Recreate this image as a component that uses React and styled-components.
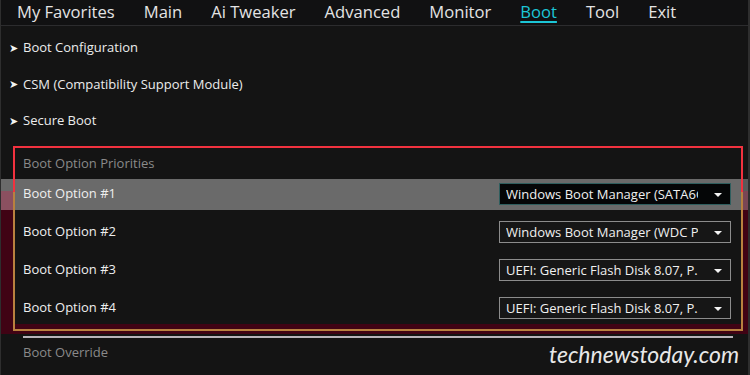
import styled, { createGlobalStyle } from "styled-components";

const GlobalStyle = createGlobalStyle`
  html, body { margin: 0; padding: 0; background: #141414; }
  body { font-family: "Open Sans", "Noto Sans", sans-serif; }
`;

const tabs = ["My Favorites", "Main", "Ai Tweaker", "Advanced", "Monitor", "Boot", "Tool", "Exit"];
const menus = ["Boot Configuration", "CSM (Compatibility Support Module)", "Secure Boot"];
const options = [
  { label: "Boot Option #1", value: "Windows Boot Manager (SATA6G", active: true },
  { label: "Boot Option #2", value: "Windows Boot Manager (WDC PC" },
  { label: "Boot Option #3", value: "UEFI: Generic Flash Disk 8.07, P." },
  { label: "Boot Option #4", value: "UEFI: Generic Flash Disk 8.07, P." },
];

const MAROON = "#400314";
const RED = "#f2323f";
const ORANGE = "#b9813f";

export default function App() {
  return (
    <>
      <GlobalStyle />
      <Screen>
        <TabBar>
          {tabs.map((t) => (
            <Tab key={t} active={t === "Boot" ? "true" : "false"}>{t}</Tab>
          ))}
        </TabBar>

        <MenuList>
          {menus.map((m) => (
            <MenuRow key={m}>
              <Arrow>➤</Arrow>
              {m}
            </MenuRow>
          ))}
        </MenuList>

        <Priorities>
          <Frame>
            <RedCap />
            <GroupTitle>Boot Option Priorities</GroupTitle>
            <OptionList>
              {options.map((o) => (
                <OptionRow key={o.label} active={o.active ? "true" : "false"}>
                  <span>{o.label}</span>
                  <Select active={o.active ? "true" : "false"}>
                    <SelectText>{o.value}</SelectText>
                    <Caret />
                  </Select>
                </OptionRow>
              ))}
            </OptionList>
          </Frame>
        </Priorities>

        <Divider />
        <OverrideTitle>Boot Override</OverrideTitle>

        <Watermark>technewstoday.com</Watermark>
      </Screen>
    </>
  );
}

const Screen = styled.div`
  position: relative;
  width: 750px;
  height: 375px;
  overflow: hidden;
  background: #141414;
  border-left: 1px solid #2e2e2e;
  border-right: 2px solid #2e2e2e;
  box-sizing: border-box;
`;

const TabBar = styled.div`
  display: flex;
  align-items: center;
  gap: 29px;
  height: 25px;
  padding-left: 16px;
  padding-bottom: 1px;
  box-sizing: border-box;
  height: 26px;
  background: #111112;
  border-bottom: 1px solid #2c2c2e;
`;

const Tab = styled.div`
  font-size: 16.6px;
  line-height: 22px;
  color: ${(p) => (p.active === "true" ? "#1cc6d6" : "#e4e4e4")};
  text-decoration: ${(p) => (p.active === "true" ? "underline" : "none")};
  text-decoration-thickness: 2px;
  text-underline-offset: 3px;
`;

const MenuList = styled.div`
  padding-top: 3px;
`;

const MenuRow = styled.div`
  display: flex;
  align-items: center;
  height: 36.5px;
  padding-left: 8px;
  font-size: 13px;
  color: #ececec;
`;

const Arrow = styled.span`
  width: 14px;
  font-size: 11px;
  color: #f2f2f2;
`;

const Priorities = styled.div`
  position: relative;
  margin-top: 7px;
  padding: 0 5px 3px 12px;

  &::before {
    content: "";
    position: absolute;
    left: 0;
    right: 0;
    top: 46px;
    bottom: 0;
    background: ${MAROON};
  }
`;

const Frame = styled.div`
  position: relative;
  border: 2px solid ${ORANGE};
  background: #141414;
  padding-bottom: 5px;
  box-shadow: inset 0 -5px 0 ${MAROON};
`;

/* red top part of the annotation frame, drawn over the orange one */
const RedCap = styled.div`
  position: absolute;
  left: -2px;
  right: -2px;
  top: -2px;
  height: 44px;
  border: 2px solid ${RED};
  border-bottom: 0;
  z-index: 2;
  pointer-events: none;
`;

const GroupTitle = styled.div`
  height: 31px;
  display: flex;
  align-items: center;
  padding-left: 8px;
  font-size: 13px;
  color: #8a8a8a;
`;

const OverrideTitle = styled(GroupTitle)`
  height: 28px;
  padding-left: 22px;
  padding-bottom: 2px;
`;

const OptionList = styled.div`
  display: flex;
  flex-direction: column;
  gap: 7px;
`;

const OptionRow = styled.div`
  position: relative;
  display: flex;
  align-items: center;
  justify-content: space-between;
  height: 31px;
  padding: 0 10px 2px 8px;
  box-sizing: border-box;
  font-size: 13px;
  color: #efefef;
  background: ${(p) => (p.active === "true" ? "#6a6a6a" : "transparent")};

  ${(p) =>
    p.active === "true" &&
    `
    &::before {
      content: "";
      position: absolute;
      left: -14px;
      top: 0;
      width: 12px;
      height: 100%;
      background: linear-gradient(to bottom, #6a6a6a 12px, #8b5060 12px);
    }
    &::after {
      content: "";
      position: absolute;
      right: -9px;
      top: 0;
      width: 7px;
      height: 100%;
      background: linear-gradient(to bottom, #5a5a5a 12px, #7a4654 12px);
    }
  `}

  & > div {
    margin-top: 2px;
  }
`;

const Select = styled.div`
  display: flex;
  align-items: center;
  justify-content: space-between;
  width: 232px;
  height: 22px;
  box-sizing: border-box;
  padding: 0 8px 0 6px;
  background: ${(p) => (p.active === "true" ? "#050607" : "#161616")};
  border: 1px solid ${(p) => (p.active === "true" ? "#2f5e5e" : "#8c8c8c")};
`;

const SelectText = styled.span`
  width: 192px;
  overflow: hidden;
  white-space: nowrap;
  text-overflow: clip;
  font-size: 13px;
  color: #f0f0f0;
`;

const Caret = styled.span`
  width: 0;
  height: 0;
  border-left: 4px solid transparent;
  border-right: 4px solid transparent;
  border-top: 4px solid #f4f4f4;
  margin-top: 1px;
`;

const Divider = styled.div`
  height: 2px;
  margin: 2px 15px 0 22px;
  background: #b9b4ba;
`;

const Watermark = styled.div`
  position: absolute;
  right: 9px;
  bottom: 7px;
  font-family: "Lato", "Open Sans", sans-serif;
  font-size: 23px;
  font-style: italic;
  color: #e8e8e8;
`;
